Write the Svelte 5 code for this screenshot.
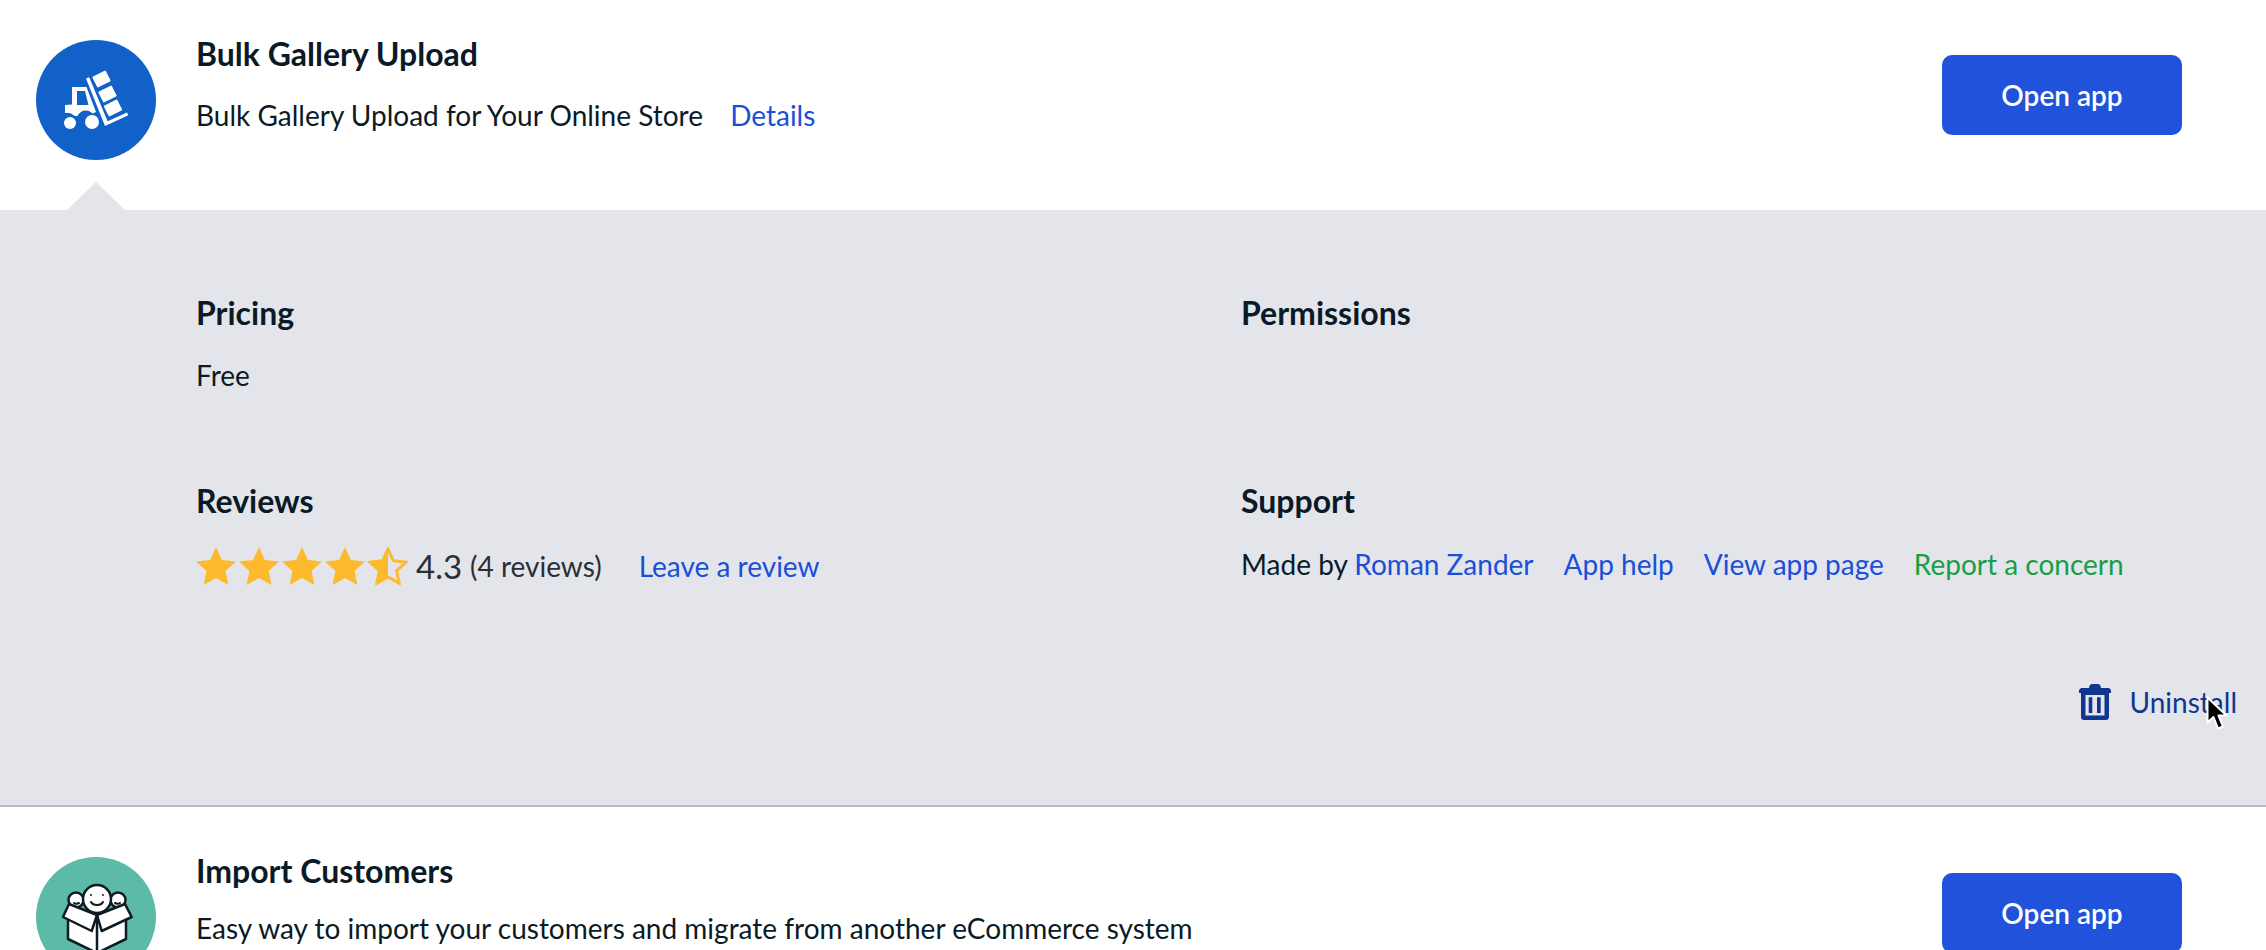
<script lang="ts">
  const starPath = 'M20 0l5.900 12.900L40 14.500l-10.400 9.600L32.400 38 20 31 7.600 38l2.800-13.900L0 14.500l14.100-1.600z';
  const halfStar = 'M20 0v31L7.600 38l2.800-13.900L0 14.500l14.100-1.600z';
</script>

<div class="page">
  <section class="app-row">
    <div class="avatar blue">
      <svg viewBox="0 0 120 120" width="120" height="120" aria-hidden="true">
        <g fill="#fff">
          <rect x="58" y="33" width="15" height="12" rx="1" transform="rotate(-27 65.500 39)" />
          <rect x="64" y="48" width="15" height="12" rx="1" transform="rotate(-27 71.500 54)" />
          <rect x="69.500" y="62" width="15" height="12" rx="1" transform="rotate(-27 77 68)" />
          <path d="M50 38.500l3.200-1.200L71.600 81.300 91 72.400l1.400 2.900L69 86z" />
          <path d="M36 47h14.500l9.500 25-3.500 1.500c-2-2-4-3-6.500-3-4 0-7 2-8.500 5.500h-3c-1.500-1.500-3-2.500-5-3L29 73V65l7-.500zm5 4v14h11.500L49 51z" fill-rule="evenodd" />
          <circle cx="34" cy="83" r="6" />
          <circle cx="56" cy="82" r="7" />
        </g>
      </svg>
    </div>
    <div class="info">
      <h3>Bulk Gallery Upload</h3>
      <p>Bulk Gallery Upload for Your Online Store <a class="details" href="#top">Details</a></p>
    </div>
    <button class="open">Open app</button>
  </section>

  <section class="panel">
    <i class="pointer"></i>
    <div class="grid">
      <div class="cell">
        <h4>Pricing</h4>
        <p>Free</p>
      </div>
      <div class="cell">
        <h4>Permissions</h4>
      </div>
      <div class="cell">
        <h4>Reviews</h4>
        <div class="rating">
          <span class="stars">
            {#each [0, 1, 2, 3] as n (n)}
              <svg viewBox="0 0 40 38" width="40" height="38" aria-hidden="true"><path d={starPath} fill="#fdba2c" /></svg>
            {/each}
            <svg viewBox="0 0 40 38" width="40" height="38" aria-hidden="true">
              <path d={starPath} transform="translate(2 2.100) scale(.9)" fill="none" stroke="#fdba2c" stroke-width="3.300" />
              <path d={halfStar} fill="#fdba2c" />
            </svg>
          </span>
          <span class="score">4.3</span>
          <span class="count">(4 reviews)</span>
          <a class="leave" href="#top">Leave a review</a>
        </div>
      </div>
      <div class="cell">
        <h4>Support</h4>
        <div class="support">
          <span>Made by <a href="#top">Roman Zander</a></span>
          <a href="#top">App help</a>
          <a href="#top">View app page</a>
          <a class="green" href="#top">Report a concern</a>
        </div>
      </div>
    </div>
    <div class="actions">
      <a class="uninstall" href="#top">
        <svg viewBox="0 0 32 36" width="32" height="36" aria-hidden="true">
          <path d="M10 4c.3-2.500 1.500-4 3-4h6c1.500 0 2.700 1.500 3 4h8l2 2v3H0V6l2-2z" fill="#11368f" />
          <path d="M2 9h28v24c0 1.700-1.300 3-3 3H5c-1.700 0-3-1.300-3-3zm4.500 2v20.500h19V11zM9.700 13.300h3.600V29H9.700zm8.300 0h3.700V29H18z" fill="#11368f" fill-rule="evenodd" />
        </svg>
        <span>Uninstall</span>
      </a>
      <svg class="cursor" viewBox="0 0 22 35" width="22" height="35" aria-hidden="true">
        <path d="M1.500 1.500v25l6-5.500 4.500 11.500 5-2-4.500-11H20.500z" fill="#000" stroke="#fff" stroke-width="2" stroke-linejoin="round" />
      </svg>
    </div>
  </section>

  <section class="app-row second">
    <div class="avatar teal">
      <svg viewBox="0 0 120 120" width="120" height="120" aria-hidden="true">
        <g stroke="#0d1b24" stroke-width="2.500" stroke-linejoin="round" fill="#fff">
          <circle cx="40" cy="43" r="7.500" />
          <circle cx="82" cy="43" r="7.500" />
          <circle cx="61" cy="42" r="14" />
          <path d="M32 62v20l29 14 29-14V62L61 58z" />
          <path d="M61 58L55.700 74 27 60l6-13zM61 58l4.700 16L95.700 60l-6.700-13z" />
          <path d="M61 58v38" />
        </g>
        <g fill="none" stroke="#0d1b24" stroke-width="2" stroke-linecap="round">
          <path d="M55 45c2 4 10 4 12 0" />
          <path d="M38 46c1 1 3 1 5 0M79 46c2 1 4 1 5 0" />
        </g>
        <g fill="#0d1b24">
          <circle cx="55" cy="38" r="1" />
          <circle cx="67" cy="38" r="1" />
        </g>
      </svg>
    </div>
    <div class="info">
      <h3>Import Customers</h3>
      <p>Easy way to import your customers and migrate from another eCommerce system</p>
    </div>
    <button class="open">Open app</button>
  </section>
</div>

<style>
  :global(body) {
    margin: 0;
    background: #fff;
  }
  .page {
    height: 950px;
    overflow: hidden;
    font-family: Lato, 'Noto Sans', sans-serif;
    color: #0a1a26;
  }
  .app-row {
    display: flex;
    align-items: flex-start;
    height: 210px;
    box-sizing: border-box;
    padding: 40px 84px 0 36px;
  }
  .app-row.second {
    height: 143px;
    padding-top: 50px;
  }
  .second .open {
    margin-top: 16px;
  }
  .second .info p {
    margin-top: 21px;
  }
  .avatar {
    width: 120px;
    height: 120px;
    flex: none;
    border-radius: 50%;
    overflow: hidden;
  }
  .blue {
    background: #1161c9;
  }
  .teal {
    background: #5cbba6;
  }
  .avatar svg {
    display: block;
  }
  .info {
    flex: 1;
    margin-left: 40px;
  }
  h3 {
    margin: -4px 0 0;
    font-size: 32px;
    line-height: 36px;
    font-weight: 700;
  }
  .info p {
    margin: 25px 0 0;
    font-size: 28px;
    line-height: 36px;
  }
  .details {
    margin-left: 20px;
    color: #1b4fd8;
    text-decoration: none;
  }
  .open {
    width: 240px;
    height: 80px;
    margin-top: 15px;
    border: 0;
    border-radius: 10px;
    background: #2052db;
    color: #fff;
    font: 600 28px Lato, sans-serif;
  }
  .panel {
    position: relative;
    height: 597px;
    box-sizing: border-box;
    padding: 85px 84px 0 196px;
    background: #e3e5eb;
    border-bottom: 2px solid #b7bdc6;
  }
  .pointer {
    position: absolute;
    left: 67px;
    top: -28px;
    width: 58px;
    height: 28px;
    background: #e3e5eb;
    clip-path: polygon(50% 0, 100% 100%, 0 100%);
  }
  .grid {
    display: grid;
    grid-template-columns: 1045px 1fr;
    grid-template-rows: 188px auto;
  }
  h4 {
    margin: 0;
    font-size: 32px;
    line-height: 36px;
    font-weight: 700;
  }
  .cell p {
    margin: 26px 0 0;
    font-size: 28px;
    line-height: 36px;
  }
  .rating {
    display: flex;
    align-items: center;
    margin-top: 25px;
    height: 44px;
    font-size: 28px;
    color: #2b2e33;
  }
  .stars {
    display: flex;
    gap: 3px;
  }
  .stars svg {
    display: block;
  }
  .score {
    margin-left: 8px;
    font-size: 33px;
  }
  .count {
    margin-left: 8px;
  }
  .leave {
    margin-left: 37px;
    color: #1b4fd8;
    text-decoration: none;
  }
  .support {
    display: flex;
    gap: 30px;
    margin-top: 27px;
    font-size: 28px;
    line-height: 36px;
  }
  .support a {
    color: #1b4fd8;
    text-decoration: none;
  }
  .support a.green {
    color: #1a9e45;
  }
  .actions {
    position: relative;
    display: flex;
    justify-content: flex-end;
    margin: 96px -55px 0 0;
  }
  .uninstall {
    display: flex;
    align-items: center;
    gap: 19px;
    color: #11368f;
    font-size: 28px;
    text-decoration: none;
  }
  .cursor {
    position: absolute;
    right: 9px;
    top: 12px;
  }
</style>
